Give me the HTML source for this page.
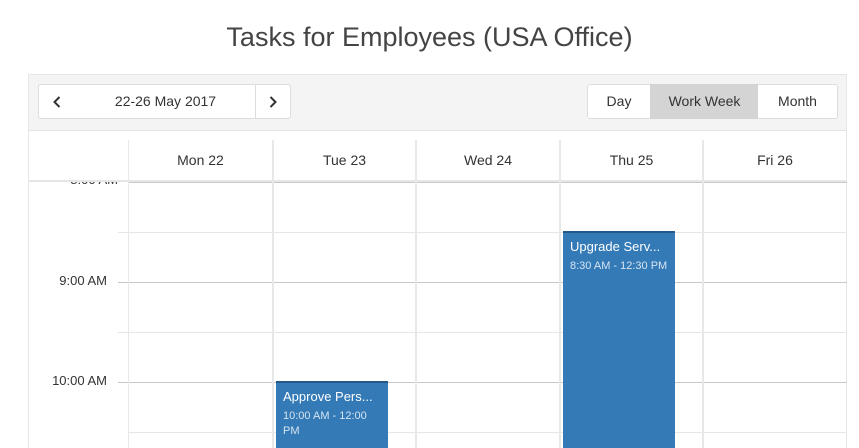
<!DOCTYPE html>
<html><head><style>
body{margin:0;width:859px;height:448px;overflow:hidden;background:#fff;font-family:"Liberation Sans",sans-serif;color:#333;position:relative}
.a{position:absolute}
.t{left:0;width:859px;top:22px;text-align:center;font-size:27px;color:#444}
.btn{position:absolute;top:84px;height:35px;border:1px solid #ddd;background:#fff;box-sizing:border-box;font-size:14px;text-align:center;line-height:33px;color:#333}
.btn svg{position:absolute;left:50%;top:50%;margin:-6px 0 0 -4px}
.hl{position:absolute;left:128px;width:719px;height:1px}
.vl{position:absolute;width:2px;background:#e8e8e8}
.hd{position:absolute;top:152px;font-size:14px;text-align:center}
.ev{position:absolute;background:#337ab7;color:#fff;box-sizing:border-box;padding:6px 7px;border-top:2px solid #235a8a}
.ev b{font-weight:normal;font-size:13px;display:block}
.ev i{font-style:normal;font-size:11px;color:#d7e4f1;display:block;margin-top:5px;line-height:15px}
.tm{position:absolute;font-size:13px;color:#333}
</style></head><body>
<div class="a t">Tasks for Employees (USA Office)</div>
<div class="a" style="left:28px;top:74px;width:819px;height:374px;border:1px solid #e6e6e6;border-bottom:none;box-sizing:border-box"></div>
<div class="a" style="left:29px;top:75px;width:817px;height:55px;background:#f4f4f4;border-bottom:1px solid #e3e3e3"></div>
<div class="btn" style="left:38px;width:253px;border-radius:3px"></div>
<div class="btn" style="left:38px;width:38px;border-radius:3px 0 0 3px"><svg width="8" height="12"><path d="M6.5 1L1.5 6L6.5 11" fill="none" stroke="#333" stroke-width="2"/></svg></div>
<div class="btn" style="left:75px;width:181px;border-left:none;border-right:none">22-26 May 2017</div>
<div class="btn" style="left:255px;width:36px;border-radius:0 3px 3px 0"><svg width="8" height="12"><path d="M1.5 1L6.5 6L1.5 11" fill="none" stroke="#333" stroke-width="2"/></svg></div>
<div class="btn" style="left:587px;width:64px;border-radius:3px 0 0 3px">Day</div>
<div class="btn" style="left:650px;width:109px;background:#d4d4d4;border-color:#d4d4d4">Work Week</div>
<div class="btn" style="left:758px;width:80px;border-radius:0 3px 3px 0;border-left:none">Month</div>
<div class="hd" style="left:128px;width:145px">Mon 22</div>
<div class="hd" style="left:273px;width:143px">Tue 23</div>
<div class="hd" style="left:416px;width:144px">Wed 24</div>
<div class="hd" style="left:560px;width:143px">Thu 25</div>
<div class="hd" style="left:703px;width:144px">Fri 26</div>
<div class="a" style="left:29px;top:180px;width:818px;height:2px;background:#e6e6e6"></div>
<div class="hl" style="top:182px;background:#c8c8c8"></div>
<div class="hl" style="top:232px;background:#e6e6e6"></div>
<div class="hl" style="top:282px;background:#c8c8c8;left:118px;width:729px"></div>
<div class="hl" style="top:332px;background:#e6e6e6"></div>
<div class="hl" style="top:382px;background:#c8c8c8;left:118px;width:729px"></div>
<div class="hl" style="top:432px;background:#e6e6e6"></div>
<div class="a" style="left:118px;top:232px;width:10px;height:1px;background:#e6e6e6"></div>
<div class="a" style="left:118px;top:332px;width:10px;height:1px;background:#e6e6e6"></div>
<div class="vl" style="left:128px;top:140px;height:308px;width:1px"></div>
<div class="vl" style="left:272px;top:140px;height:308px"></div>
<div class="vl" style="left:415px;top:140px;height:308px"></div>
<div class="vl" style="left:559px;top:140px;height:308px"></div>
<div class="vl" style="left:702px;top:140px;height:308px"></div>
<div class="a" style="left:29px;top:182px;width:89px;height:6px;overflow:hidden"><div class="tm" style="right:0;top:-10px">8:00 AM</div></div>
<div class="tm" style="left:0;width:107px;text-align:right;top:273px">9:00 AM</div>
<div class="tm" style="left:0;width:107px;text-align:right;top:373px">10:00 AM</div>
<div class="ev" style="left:563px;top:231px;width:112px;height:217px"><b>Upgrade Serv...</b><i>8:30 AM - 12:30 PM</i></div>
<div class="ev" style="left:276px;top:381px;width:112px;height:67px"><b>Approve Pers...</b><i>10:00 AM - 12:00 PM</i></div>
</body></html>
